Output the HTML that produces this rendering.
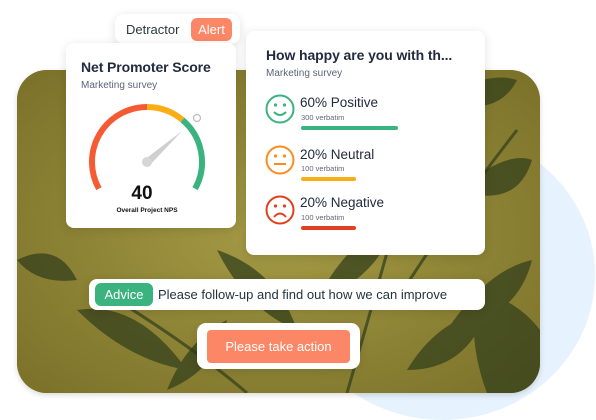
<!DOCTYPE html>
<html><head><meta charset="utf-8"><style>
*{margin:0;padding:0;box-sizing:border-box}
body{width:596px;height:413px;overflow:hidden;background:#fff;position:relative;font-family:"Liberation Sans","DejaVu Sans",sans-serif}
.circle{position:absolute;left:290px;top:130px;width:305px;height:290px;border-radius:50%;background:#e6f2fd}
.photo{position:absolute;left:17px;top:70px;width:523px;height:323px;border-radius:30px;overflow:hidden;background:#877c34;box-shadow:0 2px 6px rgba(0,0,0,.15)}
.card{position:absolute;background:#fff;border-radius:8px;box-shadow:0 2px 10px rgba(0,0,0,.12)}
.t{color:#222b3f;font-weight:bold}
.sub{color:#5a6478;font-size:10px}
</style></head><body>
<div class="circle"></div>
<div class="photo">
<svg width="523" height="323" viewBox="0 0 523 323">
<defs><radialGradient id="g" cx="50%" cy="50%" r="70%"><stop offset="0" stop-color="#a59b45"/><stop offset="1" stop-color="#7a7029"/></radialGradient></defs>
<rect width="523" height="323" fill="url(#g)"/>
<g fill="#2f3d1a" opacity=".7">
<path d="M60 240 Q120 230 170 300 Q110 290 60 240Z"/>
<path d="M200 180 Q260 200 280 260 Q230 240 200 180Z"/>
<path d="M300 230 Q330 170 380 150 Q360 210 300 230Z"/>
<path d="M420 30 Q470 0 500 10 Q480 50 420 30Z"/>
<path d="M440 120 Q490 80 515 90 Q500 140 440 120Z"/>
<path d="M430 260 Q470 200 515 190 Q500 250 430 260Z"/>
<path d="M390 300 Q420 250 470 240 Q450 300 390 300Z"/>
<path d="M0 190 Q40 170 60 210 Q20 215 0 190Z"/>
<path d="M150 320 Q170 270 210 250 Q200 300 150 320Z"/>
<path d="M460 220 Q500 230 523 260 L523 323 L470 323 Q450 270 460 220Z"/>
<path d="M250 30 Q270 60 260 110 Q240 70 250 30Z"/>
</g>
<g stroke="#2f3d1a" stroke-width="3" fill="none" opacity=".7">
<path d="M420 0 Q380 150 330 323"/>
<path d="M500 60 Q430 150 380 230"/>
<path d="M100 230 Q180 280 230 323"/>
</g>
</svg>
</div>

<div class="card" style="left:115px;top:14px;width:125px;height:30px;border-radius:9px"></div>
<div style="position:absolute;left:126px;top:22px;font-size:13px;color:#2a3a3a">Detractor</div>
<div style="position:absolute;left:191px;top:18px;width:41px;height:23px;background:#fc8766;border-radius:6px;color:#fff;font-size:13px;line-height:23px;text-align:center">Alert</div>

<div class="card" style="left:66px;top:43px;width:170px;height:185px"></div>
<div class="t" style="position:absolute;left:81px;top:59px;font-size:14px;letter-spacing:-.1px">Net Promoter Score</div>
<div class="sub" style="position:absolute;left:81px;top:80px">Marketing survey</div>
<svg style="position:absolute;left:66px;top:43px" width="170" height="185" viewBox="66 43 170 185">
<path d="M98.9 188.7 A55 55 0 0 1 147 107" stroke="#f55a33" stroke-width="6" fill="none"/>
<path d="M147 107 A55 55 0 0 1 182.4 119.9" stroke="#fbad15" stroke-width="6" fill="none"/>
<path d="M182.4 119.9 A55 55 0 0 1 195.1 188.7" stroke="#3bb37f" stroke-width="6" fill="none"/>
<path d="M144 160 L182 131 L150 165Z" fill="#cfcfcf"/>
<circle cx="147" cy="162" r="5" fill="#d6d6d6"/>
<circle cx="197" cy="118" r="3.5" fill="none" stroke="#bbb" stroke-width="1.2"/>
<text x="142" y="199" text-anchor="middle" font-size="19" font-weight="bold" fill="#111" font-family="Liberation Sans">40</text>
<text x="147" y="212" text-anchor="middle" font-size="6.5" font-weight="bold" fill="#111" font-family="Liberation Sans">Overall Project NPS</text>
</svg>

<div class="card" style="left:246px;top:31px;width:239px;height:224px"></div>
<div class="t" style="position:absolute;left:266px;top:47px;font-size:14px;letter-spacing:-.1px">How happy are you with th...</div>
<div class="sub" style="position:absolute;left:266px;top:68px">Marketing survey</div>
<svg style="position:absolute;left:265px;top:94px" width="32" height="136">
<g fill="none" stroke-width="2">
<circle cx="15" cy="15" r="13.5" stroke="#3bb37f"/>
<circle cx="15" cy="66" r="13.5" stroke="#fb8c1e"/>
<circle cx="15" cy="116" r="13.5" stroke="#e0401e"/>
<path d="M9 18 Q15 24 21 18" stroke="#3bb37f"/>
<path d="M9 70 H21" stroke="#fb8c1e"/>
<path d="M9 123 Q15 116 21 123" stroke="#e0401e"/>
</g>
<circle cx="10.5" cy="11" r="1.6" fill="#3bb37f"/><circle cx="19.5" cy="11" r="1.6" fill="#3bb37f"/>
<circle cx="10.5" cy="62" r="1.6" fill="#fb8c1e"/><circle cx="19.5" cy="62" r="1.6" fill="#fb8c1e"/>
<circle cx="10.5" cy="112" r="1.6" fill="#e0401e"/><circle cx="19.5" cy="112" r="1.6" fill="#e0401e"/>
</svg>
<div style="position:absolute;left:300px;top:95px;font-size:13.5px;color:#222b3f">60% Positive</div>
<div style="position:absolute;left:301px;top:113px;font-size:7.5px;color:#667">300 verbatim</div>
<div style="position:absolute;left:301px;top:126px;width:97px;height:4px;border-radius:2px;background:#3bb37f"></div>
<div style="position:absolute;left:300px;top:147px;font-size:13.5px;color:#222b3f">20% Neutral</div>
<div style="position:absolute;left:301px;top:164px;font-size:7.5px;color:#667">100 verbatim</div>
<div style="position:absolute;left:301px;top:177px;width:55px;height:4px;border-radius:2px;background:#fbad15"></div>
<div style="position:absolute;left:300px;top:195px;font-size:13.5px;color:#222b3f">20% Negative</div>
<div style="position:absolute;left:301px;top:213px;font-size:7.5px;color:#667">100 verbatim</div>
<div style="position:absolute;left:301px;top:226px;width:55px;height:4px;border-radius:2px;background:#e0401e"></div>

<div class="card" style="left:89px;top:279px;width:396px;height:31px"></div>
<div style="position:absolute;left:95px;top:283px;width:58px;height:23px;background:#3bb37f;border-radius:6px;color:#fff;font-size:13px;line-height:23px;text-align:center">Advice</div>
<div style="position:absolute;left:158px;top:287px;font-size:13px;color:#23343c">Please follow-up and find out how we can improve</div>

<div class="card" style="left:197px;top:323px;width:163px;height:46px;border-radius:9px"></div>
<div style="position:absolute;left:207px;top:330px;width:143px;height:33px;background:#fc8766;border-radius:4px;color:#fff;font-size:13px;line-height:33px;text-align:center">Please take action</div>
</body></html>
